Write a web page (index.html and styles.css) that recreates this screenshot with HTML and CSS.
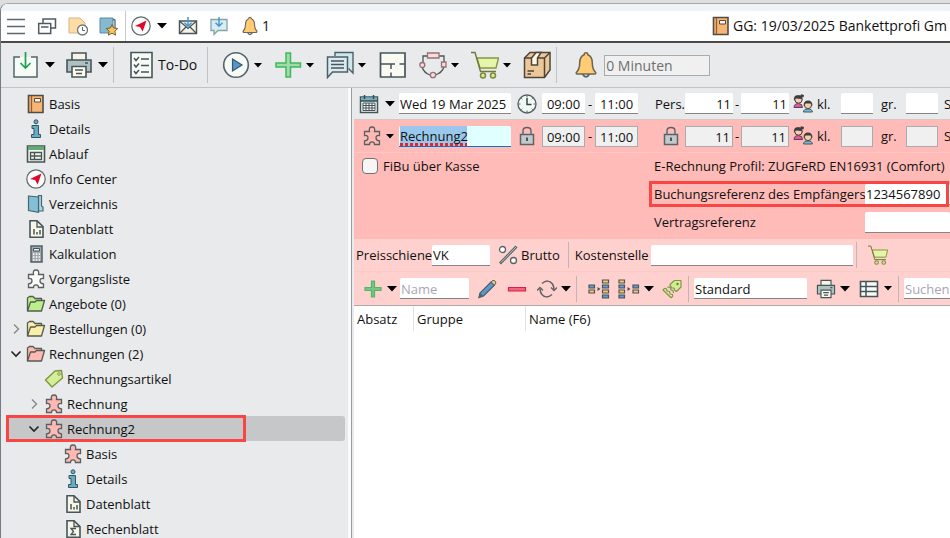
FILE: index.html
```html
<!DOCTYPE html>
<html lang="de">
<head>
<meta charset="utf-8">
<title>Bankettprofi</title>
<link rel="stylesheet" href="styles.css">
</head>
<body>
<svg class="sprite" aria-hidden="true">
  <symbol id="i-down" viewBox="0 0 10 6"><path d="M0 0H10L5 5.500Z" fill="#000"/></symbol>
  <symbol id="i-menu" viewBox="0 0 20 20"><path d="M1 3.500H19M1 10.500H19M1 17.500H19" stroke="#5b686d" stroke-width="1.300"/></symbol>
  <symbol id="i-windows" viewBox="0 0 20 20"><g fill="#fff" stroke="#4d5b61" stroke-width="1.500"><path d="M6 8V3H18.500V12H14"/><path d="M1.700 7.500H13.700V17.500H1.700ZM4 11H11.500"/></g></symbol>
  <symbol id="i-docclock" viewBox="0 0 20 20"><path d="M1 2H12L17 7V17H1Z" fill="#ffdca5" stroke="#d6b583"/><circle cx="14.500" cy="14" r="5" fill="#fff" stroke="#6c797c" stroke-width="1.300"/><path d="M14.500 11V14.500H17" fill="none" stroke="#59666b"/></symbol>
  <symbol id="i-bookstar" viewBox="0 0 20 20"><path d="M1 2H14V17H1Z" fill="#85b9cf" stroke="#5b8ba0"/><path d="M14 3.500L16 4V12" fill="none" stroke="#4d6770" stroke-width="1.300"/><path d="M13 8.500L14.600 12 18.800 12.500 15.800 15.200 16.600 19.200 13 17.200 9.400 19.200 10.200 15.200 7.200 12.500 11.400 12Z" fill="#ffc554" stroke="#74603e"/></symbol>
  <symbol id="i-nav" viewBox="0 0 20 20"><circle cx="10" cy="10" r="9.200" fill="#fbfcfa" stroke="#5d696b" stroke-width="1.200"/><path d="M15.500 4.500L11.700 15.500 9 11 4 10Z" fill="#e0062e"/></symbol>
  <symbol id="i-mail" viewBox="0 0 20 20"><path d="M1.500 5H18.500V17.500H1.500Z" fill="#f5f3e6" stroke="#4b565a" stroke-width="1.500"/><path d="M1.500 5L10 12.500 18.500 5M1.500 17.500L8 11M18.500 17.500L12 11" fill="none" stroke="#4b565a" stroke-width="1.300"/><path d="M10 1V10M6.500 6.800L10 10.300 13.500 6.800" fill="none" stroke="#4598d5" stroke-width="1.500"/></symbol>
  <symbol id="i-chatin" viewBox="0 0 20 20"><path d="M2 3.500H18V14.500H9L5 18.500V14.500H2Z" fill="#d7edf2" stroke="#87a2a9" stroke-width="1.300"/><path d="M10 1V10M6.500 6.800L10 10.300 13.500 6.800" fill="none" stroke="#4598d5" stroke-width="1.500"/></symbol>
  <symbol id="i-bell" viewBox="0 0 20 20"><path d="M7.500 16.500Q10 20.500 12.500 16.500" fill="#fff" stroke="#566066" stroke-width="1.300"/><path d="M10 1.200Q11.300 1.200 11.300 2.700Q14.500 4 14.500 8.500Q14.500 13 17 15.500Q17 16.500 16 16.500H4Q3 16.500 3 15.500Q5.500 13 5.500 8.500Q5.500 4 8.700 2.700Q8.700 1.200 10 1.200Z" fill="#ffcb75" stroke="#6e6654" stroke-width="1.100"/></symbol>
  <symbol id="i-tray" viewBox="0 0 28 28"><path d="M8 6H2V26H25V6H19" fill="#f6fbf5" stroke="#53666b" stroke-width="1.500"/><path d="M13.500 1V17M8.500 12L13.500 17 18.500 12" fill="none" stroke="#1ca150" stroke-width="1.700"/></symbol>
  <symbol id="i-printer" viewBox="0 0 28 28"><g stroke="#46555a" stroke-width="1.600"><path d="M7 9V2H21V9" fill="#f6f4e7"/><path d="M2 9H26V21H2Z" fill="#afc0c3"/><path d="M7 15.500H21V26H7Z" fill="#fffbed"/><path d="M10 19H18M11 22.500H17M20 12H23"/></g></symbol>
  <symbol id="i-todo" viewBox="0 0 28 28"><path d="M4 1.500H25V26.500H4Z" fill="#f7fbf5" stroke="#46555a" stroke-width="1.600"/><path d="M7 7L9 9.500 12 6M7 13.500L9 16 12 12.500M7 20L9 22.500 12 19M14 8H22M14 14.500H22M14 21H22" fill="none" stroke="#46555a" stroke-width="1.500"/></symbol>
  <symbol id="i-play" viewBox="0 0 28 28"><circle cx="14" cy="14" r="12.300" fill="#f7fbf5" stroke="#53636a" stroke-width="1.600"/><path d="M10.500 8L20 14 10.500 20Z" fill="#5695d2" stroke="#39566c" stroke-width="1.200"/></symbol>
  <symbol id="i-plus" viewBox="0 0 28 28"><path d="M12 2H16.500V12H26.500V16H16.500V26H12V16H2V12H12Z" fill="#a2d9ad" stroke="#3cba59" stroke-width="1.500"/></symbol>
  <symbol id="i-plus-small" viewBox="0 0 20 20"><path d="M8.500 2H11.500V8.500H18V11.500H11.500V18H8.500V11.500H2V8.500H8.500Z" fill="#78c489" stroke="#4db866" stroke-width="1.200"/></symbol>
  <symbol id="i-chats" viewBox="0 0 28 28"><path d="M9 5V1.500H27V22L22.500 17.500" fill="#cfe8ed" stroke="#4c6068" stroke-width="1.400"/><path d="M1.500 6H21.500V21H6.500L1.500 26.500Z" fill="#dbe9f0" stroke="#4c6068" stroke-width="1.500"/><path d="M5 10H18M5 13.500H18M5 17H18" stroke="#45565d" stroke-width="1.400"/></symbol>
  <symbol id="i-plan" viewBox="0 0 28 28"><path d="M1.500 2H26V26H1.500Z" fill="#f9fbf3" stroke="#46555a" stroke-width="1.700"/><path d="M1.500 13H16M20.500 13H26M12 13V18M12 21.500V26" stroke="#46555a" stroke-width="1.500"/></symbol>
  <symbol id="i-ring" viewBox="0 0 28 28"><path d="M8 5H4V13M20 5H25V13M3 16Q5 22 11 24M25 16Q23 22 16 24" fill="none" stroke="#4d5558" stroke-width="1.300"/><g fill="#f8dcdc" stroke="#937275" stroke-width="1.300"><path d="M8.500 2H20V7H8.500ZM22.500 11H27V16H22.500Z"/><circle cx="3.300" cy="14" r="2.500"/><circle cx="14" cy="24" r="2.700"/></g></symbol>
  <symbol id="i-cart" viewBox="0 0 28 28"><path d="M6 7H27.500L25 17H9Z" fill="#e5f5a9" stroke="#87963f" stroke-width="1.400"/><path d="M0 1.500H4L9.500 20.500H25" fill="none" stroke="#73773f" stroke-width="1.400"/><g fill="#d7eba0" stroke="#7e893d" stroke-width="1.500"><circle cx="12" cy="24.500" r="2.500"/><circle cx="22" cy="24.500" r="2.500"/></g></symbol>
  <symbol id="i-box" viewBox="0 0 28 28"><g stroke="#4e443c" stroke-width="1.500"><path d="M1.500 7L7 1.500H27V19L21.500 26.500H1.500Z" fill="#ecc798"/><path d="M1.500 7H21.500V26.500M21.500 7L27 1.500" fill="none"/><path d="M8.500 7L13 1.500H18L14.500 7V14H8.500Z" fill="#fff8e5"/><path d="M4.500 20H11M4.500 23H8"/></g></symbol>
  <symbol id="i-book" viewBox="0 0 20 20"><path d="M2.500 1.500H17V18.500H2.500Z" fill="#f9b573" stroke="#4f4d48" stroke-width="1.600"/><path d="M5.500 2V18" stroke="#915d36" stroke-width="1.300"/><path d="M8.500 4.500H14.500V8H8.500Z" fill="#fff4db" stroke="#4f4d48"/></symbol>
  <symbol id="i-info" viewBox="0 0 20 20"><g fill="#65adc5" stroke="#36545d"><circle cx="10" cy="2.800" r="2"/><path d="M6 6.500H12.500V15.500H14.500V18.500H5.500V15.500H8V9.500H6Z"/></g></symbol>
  <symbol id="i-schedule" viewBox="0 0 20 20"><path d="M1.500 2H18.500V18H1.500Z" fill="#f4f4e7" stroke="#46555a" stroke-width="1.600"/><path d="M2 2.500H18V6H2Z" fill="#60ae72"/><path d="M4.500 8.500H15.500V15.500H4.500ZM4.500 12H15.500M8.500 8.500V15.500" fill="none" stroke="#46555a" stroke-width="1.300"/></symbol>
  <symbol id="i-folder-blue" viewBox="0 0 20 20"><path d="M12.500 1.500H15.500V12L17 13V17H12.500Z" fill="#a9d4e0" stroke="#446773" stroke-width="1.200"/><path d="M2.500 2L12.500 3V18.300L2.500 16.500Z" fill="#84bfd4" stroke="#446773" stroke-width="1.200"/></symbol>
  <symbol id="i-sheet" viewBox="0 0 20 20"><path d="M4 1.800H11L17 7.500V18.200H4Z" fill="#f8f6e6" stroke="#46555a" stroke-width="1.600"/><path d="M11 2V8H17" fill="none" stroke="#46555a" stroke-width="1.300"/><path d="M8 10V15.500M11 13V15.500M14 11V15.500" stroke="#46555a" stroke-width="1.500"/></symbol>
  <symbol id="i-sum" viewBox="0 0 20 20"><path d="M4 1.800H11L17 7.500V18.200H4Z" fill="#f8f6e6" stroke="#46555a" stroke-width="1.600"/><path d="M11 2V7.500H17M13 9.500H8L10.500 12.500 8 15.500H13" fill="none" stroke="#46555a" stroke-width="1.300"/></symbol>
  <symbol id="i-calc" viewBox="0 0 20 20"><path d="M5 2H16V18H5Z" fill="#a0aaad" stroke="#526065" stroke-width="1.500"/><path d="M7.500 4.500H13.500V7H7.500Z" fill="#e8eff0" stroke="#46555a"/><path d="M7 10H14.500M7 13H14.500M7 16H14.500" stroke="#fff" stroke-width="1.500" stroke-dasharray="1.500 1.300"/></symbol>
  <symbol id="i-puzzle" viewBox="0 0 20 20"><path d="M7.500 5.500Q6.500 1 10 1Q13.500 1 12.500 5.500H17.500V9.500Q14 9 14 12Q14 14.500 17.500 15V18.500H12.500Q12.500 15.800 10 15.800Q7.500 15.800 7.500 18.500H2.500V15Q6 14.500 6 12Q6 9 2.500 9.500V5.500Z" fill="currentColor" stroke="#59605f" stroke-width="1.300"/></symbol>
  <symbol id="i-folder" viewBox="0 0 20 20"><g fill="currentColor" stroke="#555b50" stroke-width="1.300" stroke-linejoin="round"><path d="M1.500 17V4L3.500 2.500H7L9 4.500H15.500V8"/><path d="M1.500 17L4.500 8H9L10.500 6.500H18.500L15.500 17Z"/></g></symbol>
  <symbol id="i-tag" viewBox="0 0 20 20"><path d="M1.500 11L11 2 17.500 1.500 18.500 9 8 18Z" fill="#d5ee99" stroke="#7f963f" stroke-width="1.400" stroke-linejoin="round"/><circle cx="15" cy="5" r="1.300" fill="#fff" stroke="#7f963f"/></symbol>
  <symbol id="i-open" viewBox="0 0 16 16"><path d="M3.500 5.500L8 10 12.500 5.500" fill="none" stroke="#222" stroke-width="1.600"/></symbol>
  <symbol id="i-closed" viewBox="0 0 16 16"><path d="M6 3.500L10.500 8 6 12.500" fill="none" stroke="#888" stroke-width="1.400"/></symbol>
  <symbol id="i-calendar" viewBox="0 0 20 20"><path d="M1.500 3H18.500V18.500H1.500Z" fill="#f5fbf6" stroke="#46555a" stroke-width="1.500"/><path d="M2 3.500H18V7H2Z" fill="#6eafc3"/><path d="M5.500 1V5M14.500 1V5M2 7H18" stroke="#344a50" stroke-width="1.500"/><path d="M4 9H16V16.500H4ZM4 11.500H16M4 14H16M7 9V16.500M10 9V16.500M13 9V16.500" fill="none" stroke="#46555a"/></symbol>
  <symbol id="i-clock" viewBox="0 0 20 20"><circle cx="10" cy="10" r="9" fill="#f3faf3" stroke="#526168" stroke-width="1.400"/><path d="M10 4V10.500H14.500" fill="none" stroke="#33464e" stroke-width="1.500"/><path d="M10 2V3.500M10 16.500V18M2 10H3.500M16.500 10H18M4.300 4.300L5.300 5.300M15.700 4.300L14.700 5.300M4.300 15.700L5.300 14.700M15.700 15.700L14.700 14.700" stroke="#526168"/></symbol>
  <symbol id="i-lock" viewBox="0 0 20 20"><path d="M6 8V5Q6 1.500 10 1.500Q14 1.500 14 5V8" fill="none" stroke="#59646a" stroke-width="1.400"/><path d="M3.500 8.500H16.500V18.500H3.500Z" fill="#c2c9ca" stroke="#59646a" stroke-width="1.500"/><path d="M10 11.500V15" stroke="#303c40" stroke-width="1.600"/></symbol>
  <symbol id="i-people" viewBox="0 0 20 20"><path d="M1 13.500Q1 9.500 5.500 9.500Q9.500 9.500 9.500 13.500Z" fill="#ef4fa6" stroke="#4d4850"/><circle cx="5.500" cy="5.500" r="3.700" fill="#f5cfaa" stroke="#493f3c"/><path d="M1 7Q0 1 5 1.200L7.500 1.500 8 .3 11 1 10.500 3.300 9 3.500 9.500 7 8.500 5 2.500 4.500Z" fill="#3e3d42"/><path d="M10.500 18Q10.500 15 15 15Q19.300 15 19.300 18Z" fill="#78bddb" stroke="#3e5965"/><circle cx="15" cy="11" r="3.600" fill="#f5cfaa" stroke="#493f3c"/><path d="M10.500 12Q10.500 6.500 15 6.500Q19.500 6.500 19.500 12L18 9.500 12 9.500Z" fill="#3e3d42"/></symbol>
  <symbol id="i-percent" viewBox="0 0 20 20"><path d="M18.500 1.500L2 18.500" stroke="#566365" stroke-width="2.800"/><path d="M18 2L3 17.500" stroke="#b9cdca"/><circle cx="4.500" cy="4.500" r="3" fill="#fff" stroke="#566365" stroke-width="1.300"/><circle cx="15.500" cy="15.500" r="3" fill="#fff" stroke="#566365" stroke-width="1.300"/></symbol>
  <symbol id="i-pencil" viewBox="0 0 20 20"><path d="M2 18.500L3 14 14 3 17.500 6 6.500 17Z" fill="#5d98ce" stroke="#475b69" stroke-width="1.200"/><path d="M14 3L16 1.300Q18.800 1.500 19 4L17.500 6Z" fill="#e5cc8c" stroke="#60604f"/><path d="M1.500 19L3 14 6.500 17Z" fill="#55636a"/></symbol>
  <symbol id="i-minus" viewBox="0 0 20 20"><path d="M1.500 8.500H18.500V12H1.500Z" fill="#ef6681" stroke="#dd1d43" stroke-width="1.200"/></symbol>
  <symbol id="i-refresh" viewBox="0 0 20 20"><path d="M5 4.500Q11 -.5 15.500 5Q17 7.500 17 10.500M15 15.500Q9 20.500 4.500 15Q3 12.500 3 9.500" fill="none" stroke="#5d6265" stroke-width="1.500"/><path d="M14 8.500L17 11.500 20 8.500M0 11.500L3 8.500 6 11.500" fill="none" stroke="#5d6265" stroke-width="1.300"/></symbol>
  <symbol id="i-expand" viewBox="0 0 22 20"><g stroke="#4d5357" stroke-width="1.200"><path d="M1 6H6.500V9H1ZM14.500 6H20.500V9H14.500ZM14.500 16H20.500V19H14.500Z" fill="#5e9cd1"/><path d="M1 11H6.500V14H1ZM14.500 1H20.500V4H14.500ZM14.500 11H20.500V14H14.500Z" fill="#f1ce6b"/></g><path d="M9.500 8L12.500 10 9.500 12Z" fill="#4d5357"/></symbol>
  <symbol id="i-collapse" viewBox="0 0 22 20"><g stroke="#4d5357" stroke-width="1.200"><path d="M1 1H6.500V4H1ZM1 11H6.500V14H1ZM15 11H20.500V14H15Z" fill="#f1ce6b"/><path d="M1 6H6.500V9H1ZM1 16H6.500V19H1ZM15 6H20.500V9H15Z" fill="#5e9cd1"/></g><path d="M9.500 8L12.500 10 9.500 12Z" fill="#4d5357"/></symbol>
  <symbol id="i-tags" viewBox="0 0 20 20"><g fill="#d2ed92" stroke="#80974a" stroke-width="1.200" stroke-linejoin="round"><path d="M8 5.500L12.500 1.500H19V8L14.500 12.500 12.500 11 12 9 9.500 9Z"/><path d="M1 11Q2.500 8.500 4.500 10L5 12 7.500 12.500 8 15 10.500 15.500Q11.500 17.500 9 18.700Z"/><path d="M5.500 8.500Q7.500 7 8.500 9L9 11 11 11.500 11.500 14" fill="none"/></g><circle cx="15.500" cy="5" r="1.200" fill="#657e31"/></symbol>
  <symbol id="i-table" viewBox="0 0 20 20"><path d="M1.500 2.500H18.500V17.500H1.500Z" fill="#f8faf8" stroke="#46555a" stroke-width="1.600"/><path d="M1.500 7.500H18.500M1.500 12.500H18.500M7 2.500V17.500" stroke="#46555a" stroke-width="1.500"/></symbol>
</svg>

<div class="window">
  <header class="titlebar">
    <div class="quick">
      <button aria-label="Menü"><svg><use href="#i-menu"/></svg></button>
      <button aria-label="Fenster"><svg><use href="#i-windows"/></svg></button>
      <button aria-label="Verlauf"><svg><use href="#i-docclock"/></svg></button>
      <button aria-label="Favoriten"><svg><use href="#i-bookstar"/></svg></button>
    </div>
    <div class="quick notices">
      <button aria-label="Info Center"><svg><use href="#i-nav"/></svg><svg class="down"><use href="#i-down"/></svg></button>
      <button aria-label="E-Mail"><svg><use href="#i-mail"/></svg></button>
      <button aria-label="Nachrichten"><svg><use href="#i-chatin"/></svg></button>
      <button class="alerts"><svg><use href="#i-bell"/></svg>1</button>
    </div>
    <div class="caption"><svg><use href="#i-book"/></svg><span>GG: 19/03/2025 Bankettprofi Gm</span></div>
  </header>

  <nav class="toolbar" aria-label="Werkzeuge">
    <div class="group files">
      <button aria-label="Speichern"><svg><use href="#i-tray"/></svg><svg class="down"><use href="#i-down"/></svg></button>
      <button aria-label="Drucken"><svg><use href="#i-printer"/></svg><svg class="down"><use href="#i-down"/></svg></button>
    </div>
    <div class="group tasks">
      <button><svg><use href="#i-todo"/></svg>To-Do</button>
    </div>
    <div class="group actions">
      <button aria-label="Start"><svg><use href="#i-play"/></svg><svg class="down small"><use href="#i-down"/></svg></button>
      <button aria-label="Neu"><svg><use href="#i-plus"/></svg><svg class="down small"><use href="#i-down"/></svg></button>
      <button aria-label="Kommunikation"><svg><use href="#i-chats"/></svg><svg class="down small"><use href="#i-down"/></svg></button>
      <button class="plain" aria-label="Raumplan"><svg><use href="#i-plan"/></svg></button>
      <button aria-label="Ablauf"><svg><use href="#i-ring"/></svg><svg class="down small"><use href="#i-down"/></svg></button>
      <button aria-label="Einkauf"><svg><use href="#i-cart"/></svg><svg class="down small"><use href="#i-down"/></svg></button>
      <button aria-label="Paket"><svg><use href="#i-box"/></svg></button>
    </div>
    <div class="group reminder">
      <label for="minutes" aria-label="Erinnerung"><svg><use href="#i-bell"/></svg></label>
      <input id="minutes" class="boxed" value="0 Minuten">
    </div>
  </nav>

  <div class="workspace">
    <aside class="sidebar">
      <ul class="tree">
        <li><span class="twist"></span><svg><use href="#i-book"/></svg><a href="#">Basis</a></li>
        <li><span class="twist"></span><svg><use href="#i-info"/></svg><a href="#">Details</a></li>
        <li><span class="twist"></span><svg><use href="#i-schedule"/></svg><a href="#">Ablauf</a></li>
        <li><span class="twist"></span><svg><use href="#i-nav"/></svg><a href="#">Info Center</a></li>
        <li><span class="twist"></span><svg><use href="#i-folder-blue"/></svg><a href="#">Verzeichnis</a></li>
        <li><span class="twist"></span><svg><use href="#i-sheet"/></svg><a href="#">Datenblatt</a></li>
        <li><span class="twist"></span><svg><use href="#i-calc"/></svg><a href="#">Kalkulation</a></li>
        <li><span class="twist"></span><svg class="white"><use href="#i-puzzle"/></svg><a href="#">Vorgangsliste</a></li>
        <li><span class="twist"></span><svg class="green"><use href="#i-folder"/></svg><a href="#">Angebote (0)</a></li>
        <li><svg class="twist"><use href="#i-closed"/></svg><svg class="yellow"><use href="#i-folder"/></svg><a href="#">Bestellungen (0)</a></li>
        <li><svg class="twist"><use href="#i-open"/></svg><svg class="rose"><use href="#i-folder"/></svg><a href="#">Rechnungen (2)</a></li>
        <li class="level2"><span class="twist"></span><svg><use href="#i-tag"/></svg><a href="#">Rechnungsartikel</a></li>
        <li class="level2"><svg class="twist"><use href="#i-closed"/></svg><svg class="rose"><use href="#i-puzzle"/></svg><a href="#">Rechnung</a></li>
        <li class="level2 selected"><svg class="twist"><use href="#i-open"/></svg><svg class="rose"><use href="#i-puzzle"/></svg><a href="#">Rechnung2</a></li>
        <li class="level3"><span class="twist"></span><svg class="rose"><use href="#i-puzzle"/></svg><a href="#">Basis</a></li>
        <li class="level3"><span class="twist"></span><svg><use href="#i-info"/></svg><a href="#">Details</a></li>
        <li class="level3"><span class="twist"></span><svg><use href="#i-sheet"/></svg><a href="#">Datenblatt</a></li>
        <li class="level3"><span class="twist"></span><svg><use href="#i-sum"/></svg><a href="#">Rechenblatt</a></li>
      </ul>
    </aside>

    <main class="detail">
      <div class="booking">
        <button class="pick" aria-label="Datum wählen"><svg><use href="#i-calendar"/></svg><svg class="down"><use href="#i-down"/></svg></button>
        <input aria-label="Datum" value="Wed 19 Mar 2025">
        <svg class="mid"><use href="#i-clock"/></svg>
        <input class="time" aria-label="Beginn" value="09:00"><span class="mid">-</span>
        <input class="time" aria-label="Ende" value="11:00">
        <label class="persons" for="pmin">Pers.</label>
        <input class="number" id="pmin" value="11"><span class="mid">-</span>
        <input class="number" aria-label="Personen bis" value="11">
        <svg class="mid"><use href="#i-people"/></svg>
        <label for="small1">kl.</label><input id="small1">
        <label class="large" for="large1">gr.</label><input id="large1">
        <span class="cut">S</span>
      </div>

      <section class="invoice">
        <div class="booking">
          <button class="pick offset rose" aria-label="Rechnung wählen"><svg><use href="#i-puzzle"/></svg><svg class="down small"><use href="#i-down"/></svg></button>
          <input class="editing" aria-label="Bezeichnung" value="Rechnung2" spellcheck="false">
          <svg class="mid"><use href="#i-lock"/></svg>
          <input class="time boxed" aria-label="Beginn" value="09:00"><span class="mid">-</span>
          <input class="time boxed" aria-label="Ende" value="11:00">
          <svg class="lock"><use href="#i-lock"/></svg>
          <input class="number boxed" aria-label="Personen von" value="11"><span class="mid">-</span>
          <input class="number boxed" aria-label="Personen bis" value="11">
          <svg class="mid"><use href="#i-people"/></svg>
          <label for="small2">kl.</label><input class="boxed" id="small2">
          <label class="large" for="large2">gr.</label><input class="boxed" id="large2">
          <span class="cut">S</span>
        </div>
        <div class="options">
          <label class="check"><input type="checkbox">FiBu über Kasse</label>
          <div class="references">
            <p>E-Rechnung Profil: ZUGFeRD EN16931 (Comfort)</p>
            <div class="reference marked"><label for="bref">Buchungsreferenz des Empfängers</label><input id="bref" value="1234567890"></div>
            <div class="reference"><label for="vref">Vertragsreferenz</label><input id="vref"></div>
          </div>
        </div>
      </section>

      <section class="positions">
        <div class="bar pricing">
          <label for="price">Preisschiene</label>
          <input id="price" class="price" value="VK">
          <button class="gross"><svg><use href="#i-percent"/></svg>Brutto</button>
          <span class="sep"></span>
          <label for="cost">Kostenstelle</label>
          <input id="cost" class="cost">
          <span class="sep"></span>
          <button class="basket" aria-label="Warenkorb"><svg><use href="#i-cart"/></svg></button>
        </div>
        <div class="bar">
          <div class="tools add">
            <button aria-label="Hinzufügen"><svg><use href="#i-plus-small"/></svg><svg class="down"><use href="#i-down"/></svg></button>
            <input class="name" aria-label="Name" placeholder="Name">
          </div>
          <div class="tools edit">
            <button aria-label="Bearbeiten"><svg><use href="#i-pencil"/></svg></button>
            <button aria-label="Löschen"><svg><use href="#i-minus"/></svg></button>
            <button aria-label="Aktualisieren"><svg><use href="#i-refresh"/></svg><svg class="down"><use href="#i-down"/></svg></button>
          </div>
          <span class="sep"></span>
          <div class="tools arrange">
            <button aria-label="Gruppieren"><svg class="wide"><use href="#i-expand"/></svg></button>
            <button aria-label="Gruppierung lösen"><svg class="wide"><use href="#i-collapse"/></svg><svg class="down"><use href="#i-down"/></svg></button>
            <button aria-label="Artikel"><svg><use href="#i-tags"/></svg></button>
          </div>
          <span class="sep"></span>
          <div class="tools output">
            <input class="layout" aria-label="Layout" value="Standard">
            <button aria-label="Drucken"><svg><use href="#i-printer"/></svg><svg class="down"><use href="#i-down"/></svg></button>
            <button aria-label="Spalten"><svg><use href="#i-table"/></svg><svg class="down small"><use href="#i-down"/></svg></button>
          </div>
          <span class="sep"></span>
          <input class="search" aria-label="Suchen" placeholder="Suchen">
        </div>
      </section>

      <table class="items">
        <thead><tr><th class="col-absatz">Absatz</th><th class="col-gruppe">Gruppe</th><th>Name (F6)</th></tr></thead>
        <tbody></tbody>
      </table>
    </main>
  </div>
</div>
</body>
</html>
```

FILE: styles.css
```css
* { box-sizing: border-box; }

body {
  margin: 0;
  height: 100vh;
  overflow: hidden;
  background: #dedede;
  color: #111;
  font: 13px/20px "Open Sans", "Noto Sans", sans-serif;
  white-space: nowrap;
}

.sprite { position: absolute; width: 0; height: 0; }

svg { flex: none; width: 20px; height: 20px; }
svg.down { width: 10px; height: 6px; }
svg.down.small { width: 8px; height: 5px; margin: 0 1px; }
svg.wide { width: 22px; }

button {
  display: flex;
  align-items: center;
  flex: none;
  padding: 0;
  border: 0;
  background: none;
  color: inherit;
  font: inherit;
}

input {
  flex: none;
  height: 21px;
  min-width: 0;
  padding: 1px 1px 0;
  border: 0;
  border-bottom: 1px solid #868686;
  border-radius: 2px 2px 0 0;
  background: #fff;
  color: inherit;
  font: inherit;
}
input::placeholder { color: #aaa5b6; opacity: 1; }
input.boxed { border: 1px solid #a9abb0; border-radius: 0; background: #f0f0f0; }

.white { color: #f9fbf7; }
.green { color: #bbee8d; }
.yellow { color: #fbedaa; }
.rose { color: #ffb9b5; }

.window {
  display: flex;
  flex-direction: column;
  height: calc(100vh - 3px);
  margin-top: 3px;
  overflow: hidden;
  border-top: 1px solid #aaa;
  border-left: 1px solid #777b83;
  border-radius: 8px 0 0 0;
  background: #e8eaeb;
}

/* Title bar */
.titlebar {
  display: flex;
  align-items: center;
  flex: none;
  height: 39px;
  padding-left: 5px;
  border-top: 7px solid #edf3f6;
  border-bottom: 2px solid #4a4a4a;
  background: #fff;
}
.quick { display: flex; align-items: center; gap: 11px; height: 30px; }
.quick button { gap: 6px; }
.notices { gap: 11px; margin-left: 6px; padding-left: 5px; border-left: 1px solid #c8c8c8; }
.quick .alerts { gap: 2px; font-size: 14px; }
.caption { display: flex; align-items: center; flex: 1; gap: 2px; min-width: 0; overflow: hidden; margin-left: 441px; font-size: 14px; }

/* Main toolbar */
.toolbar { display: flex; align-items: center; flex: none; height: 45px; border-bottom: 1px solid #c3c3c5; }
.toolbar svg:not(.down) { width: 28px; height: 28px; }
.group { display: flex; align-items: center; height: 36px; padding: 0 5px; border-right: 1px solid #c0c2c4; }
.files { gap: 10px; padding-left: 11px; }
.files button { gap: 5px; }
.tasks { padding: 0 10px 0 13px; }
.tasks button { gap: 3px; font-size: 14px; }
.actions { gap: 11px; padding-left: 14px; }
.actions button { gap: 3px; }
.actions .plain { padding: 0 1px; }
.reminder { gap: 4px; padding-left: 15px; border: 0; }
.reminder label { display: flex; }
.reminder input { width: 106px; color: #6f6f6f; font-size: 14px; }

/* Tree and detail pane */
.workspace { display: flex; flex: 1; min-height: 0; }
.sidebar { flex: none; width: 350px; overflow: hidden; border-right: 3px solid #fbfbfb; }
.tree { margin: 0; padding: 3px 3px 0 0; list-style: none; }
.tree li { position: relative; display: flex; align-items: center; gap: 2px; height: 25px; padding-left: 7px; }
.tree li.level2 { padding-left: 25px; }
.tree li.level3 { padding-left: 44px; }
.tree .twist { flex: none; width: 16px; height: 16px; }
.tree a { color: inherit; text-decoration: none; padding-left: 1px; }
.tree .selected { margin-left: 5px; border-radius: 0 3px 3px 0; background: #c6c7c8; }
.tree li.selected { padding-left: 20px; }
.selected::after { content: ""; position: absolute; inset: -1px 99px -1px 0; border: 3px solid #fa4545; }

.detail { display: flex; flex-direction: column; flex: 1; min-width: 0; overflow: hidden; border-left: 1px solid #999ca0; padding-left: 2px; }

.booking {
  display: grid;
  grid-template-columns: 45px 112px 31px 43px 10px 43px 47px 48px 8px 48px 28px 24px 32px 33px 32px auto;
  align-items: center;
  flex: none;
  height: 31px;
}
.booking input { width: 100%; }
.booking .mid { justify-self: center; }
.pick { gap: 6px; padding-left: 5px; }
.pick.offset { gap: 3px; padding-left: 8px; }
.time { text-align: center; }
.number { padding-right: 2px; text-align: right; }
.persons { justify-self: end; }
.large { padding-left: 8px; }
.lock { justify-self: end; margin-right: 4px; }
.cut { padding-left: 6px; }

/* Invoice header */
.invoice { flex: none; padding-bottom: 4px; border-top: 1px solid #d9c5c6; background: #ffbbb7; }
.invoice .booking { height: 33px; border-bottom: 1px solid #ffc6c3; }
input.editing {
  border-bottom-color: #1673c4;
  background:
    repeating-linear-gradient(90deg, #e52332 0 3px, transparent 3px 5px) 1px 17px / 67px 3px no-repeat,
    linear-gradient(#9ac8ed, #9ac8ed) 1px 0 / 67px 100% no-repeat,
    #e0ffff;
}
.options { display: flex; justify-content: space-between; }
.check { display: flex; align-items: center; gap: 5px; height: 26px; padding-left: 8px; }
.check input {
  appearance: none;
  width: 16px;
  height: 16px;
  margin: 0;
  padding: 0;
  border: 1px solid #727272;
  border-radius: 4px;
  background: #f6f6f6;
}
.references { display: flex; flex-direction: column; gap: 2px; width: 296px; }
.references p { height: 26px; margin: 0; line-height: 26px; }
.reference { position: relative; display: flex; align-items: center; height: 26px; }
.reference label { flex: none; width: 211px; }
.reference input { flex: 1; }
.marked::after { content: ""; position: absolute; inset: 0 1px 0 -5px; border: 3px solid #fa4545; }

/* Position tools */
.positions { flex: none; border-bottom: 1px solid #aaa; background: #ffd1ce; }
.bar { display: flex; align-items: center; height: 33px; }
.bar svg:not(.down):not(.wide) { width: 20px; height: 20px; }
.sep { flex: none; width: 1px; height: 26px; background: #bdb5b8; }
.pricing { padding-left: 2px; border-bottom: 1px solid #fbcac7; }
.pricing label { flex: none; width: 76px; }
.price { width: 58px; }
.gross { gap: 3px; margin: 0 8px; }
.pricing .sep + label { margin-left: 6px; }
.cost { width: 202px; margin-right: 3px; }
.basket { margin-left: 11px; }
.tools { display: flex; align-items: center; flex: none; }
.tools button { gap: 4px; }
.add { gap: 3px; padding-left: 9px; }
.name { width: 69px; }
.edit { gap: 10px; padding: 0 5px 0 8px; }
.arrange { gap: 8px; padding: 0 6px 0 11px; }
.output { gap: 9px; padding: 0 5px; }
.layout { width: 113px; }
.search { flex: 1; margin-left: 5px; }

.items { flex: none; width: 100%; border-spacing: 0; background: #fff; table-layout: fixed; }
.items th { height: 25px; padding: 0 3px; border-left: 1px solid #e2e2e2; font-weight: 400; text-align: left; }
.items th:first-child { border-left: 0; }
.col-absatz { width: 59px; }
.col-gruppe { width: 112px; }
.detail::after { content: ""; flex: 1; background: #fff; }
```
